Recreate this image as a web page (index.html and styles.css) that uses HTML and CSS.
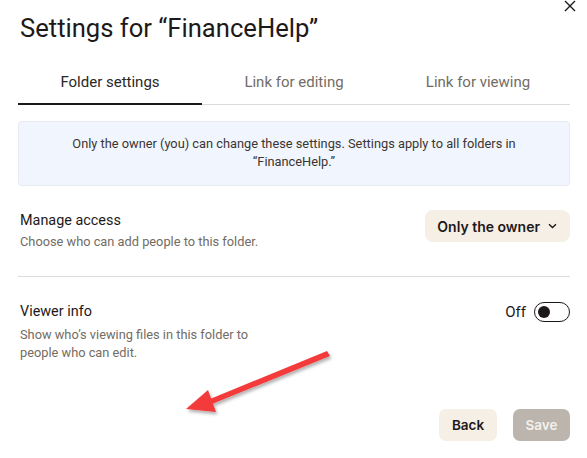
FILE: index.html
```html
<!DOCTYPE html>
<html lang="en">
<head>
<meta charset="utf-8">
<title>Settings for “FinanceHelp”</title>
<link rel="stylesheet" href="styles.css">
</head>
<body>
<div class="dialog">
  <button class="close" aria-label="Close">
    <svg width="12" height="12" viewBox="0 0 12 12"><path d="M1 1 L11 11 M11 1 L1 11" stroke="#1e1919" stroke-width="1.4" fill="none"/></svg>
  </button>
  <h1 class="title">Settings for “FinanceHelp”</h1>
  <div class="tabs">
    <div class="tab active">Folder settings</div>
    <div class="tab">Link for editing</div>
    <div class="tab">Link for viewing</div>
  </div>
  <div class="info">Only the owner (you) can change these settings. Settings apply to all folders in<br>“FinanceHelp.”</div>
  <div class="row row-access">
    <div class="row-text">
      <div class="row-title">Manage access</div>
      <div class="row-desc">Choose who can add people to this folder.</div>
    </div>
    <button class="dropdown">Only the owner
      <svg width="9" height="6" viewBox="0 0 9 6"><path d="M1 1.2 L4.5 4.5 L8 1.2" stroke="#1e1919" stroke-width="1.4" fill="none"/></svg>
    </button>
  </div>
  <div class="divider"></div>
  <div class="row row-viewer">
    <div class="row-text narrow">
      <div class="row-title">Viewer info</div>
      <div class="row-desc">Show who’s viewing files in this folder to people who can edit.</div>
    </div>
    <div class="toggle-wrap">
      <span class="toggle-label">Off</span>
      <span class="toggle"><span class="knob"></span></span>
    </div>
  </div>
  <div class="footer">
    <button class="btn btn-back">Back</button>
    <button class="btn btn-save">Save</button>
  </div>
  <svg class="arrow" width="587" height="458" viewBox="0 0 587 458">
    <defs>
      <filter id="sh" x="-20%" y="-20%" width="140%" height="160%">
        <feDropShadow dx="1.5" dy="2.5" stdDeviation="1.5" flood-color="#000" flood-opacity="0.3"/>
      </filter>
    </defs>
    <g filter="url(#sh)" fill="#f33b3b">
      <polygon points="327,351 330,356 212,404 210,399"/>
      <polygon points="186,409 208,390 216,412"/>
    </g>
  </svg>
</div>
</body>
</html>
```

FILE: styles.css
```css
* { box-sizing: border-box; }
html, body { margin: 0; padding: 0; background: #fff; }
body {
  font-family: Roboto, "Liberation Sans", Arial, sans-serif;
  color: #1e1919;
  width: 587px;
  height: 458px;
  overflow: hidden;
}
.dialog {
  position: relative;
  padding: 0 17px 0 18px;
  height: 458px;
}
.close {
  position: absolute;
  top: -1px;
  right: 10px;
  width: 14px;
  height: 14px;
  padding: 1px;
  border: 0;
  background: none;
  display: flex;
  align-items: center;
  justify-content: center;
}
.title {
  margin: 0;
  padding: 14px 0 0 2px;
  font-size: 25.6px;
  line-height: 28px;
  font-weight: 400;
  color: #1e1919;
}
.tabs {
  margin-top: 18px;
  display: grid;
  grid-template-columns: 1fr 1fr 1fr;
  box-shadow: inset 0 -1px 0 #dedbd8;
}
.tab {
  text-align: center;
  font-size: 15px;
  line-height: 18px;
  padding: 13px 0 12px;
  color: #736c64;
  border-bottom: 2px solid transparent;
}
.tab.active {
  color: #2b2725;
  border-bottom-color: #1e1919;
}
.info {
  margin-top: 16px;
  background: #f1f5fd;
  border: 1px solid #e7eaf0;
  border-radius: 4px;
  padding: 13px 16px 14px;
  text-align: center;
  font-size: 12.8px;
  line-height: 18px;
  color: #3b3633;
}
.row {
  display: flex;
  justify-content: space-between;
  align-items: flex-start;
  padding-left: 2px;
}
.row-access { margin-top: 25px; }
.row-viewer { margin-top: 25px; }
.row-title {
  font-size: 14.4px;
  line-height: 20px;
  color: #1e1919;
}
.row-desc {
  margin-top: 2px;
  font-size: 12.8px;
  line-height: 18px;
  color: #736c64;
}
.narrow .row-desc { width: 236px; line-height: 18px; margin-top: 4px; }
.dropdown {
  margin-top: -1px;
  height: 32px;
  padding: 0 13px 0 12px;
  border: 0;
  border-radius: 8px;
  background: #f5efe5;
  font-family: Inter, "Noto Sans", sans-serif;
  font-size: 14px;
  font-weight: 600;
  color: #1e1919;
  display: flex;
  align-items: center;
  gap: 8px;
}
.divider {
  margin-top: 25px;
  height: 1px;
  background: #dedbd8;
}
.toggle-wrap {
  display: flex;
  align-items: center;
  gap: 8px;
}
.toggle-label {
  font-size: 15px;
  line-height: 20px;
  color: #1e1919;
}
.toggle {
  width: 36px;
  height: 20px;
  border: 1.5px solid #1e1919;
  border-radius: 10px;
  display: flex;
  align-items: center;
  padding-left: 3px;
}
.knob {
  width: 12px;
  height: 12px;
  border-radius: 50%;
  background: #1e1919;
}
.footer {
  margin-top: 47px;
  display: flex;
  justify-content: flex-end;
  gap: 16px;
}
.btn {
  height: 32px;
  border: 0;
  border-radius: 7px;
  font-family: Inter, "Noto Sans", sans-serif;
  font-size: 13.5px;
  font-weight: 600;
  padding: 0;
}
.btn-back { background: #f5efe5; color: #1e1919; width: 58px; }
.btn-save { background: #bbb5ae; color: #f3f0ec; width: 57px; }
.arrow {
  position: absolute;
  left: 0;
  top: 0;
  pointer-events: none;
}
```
